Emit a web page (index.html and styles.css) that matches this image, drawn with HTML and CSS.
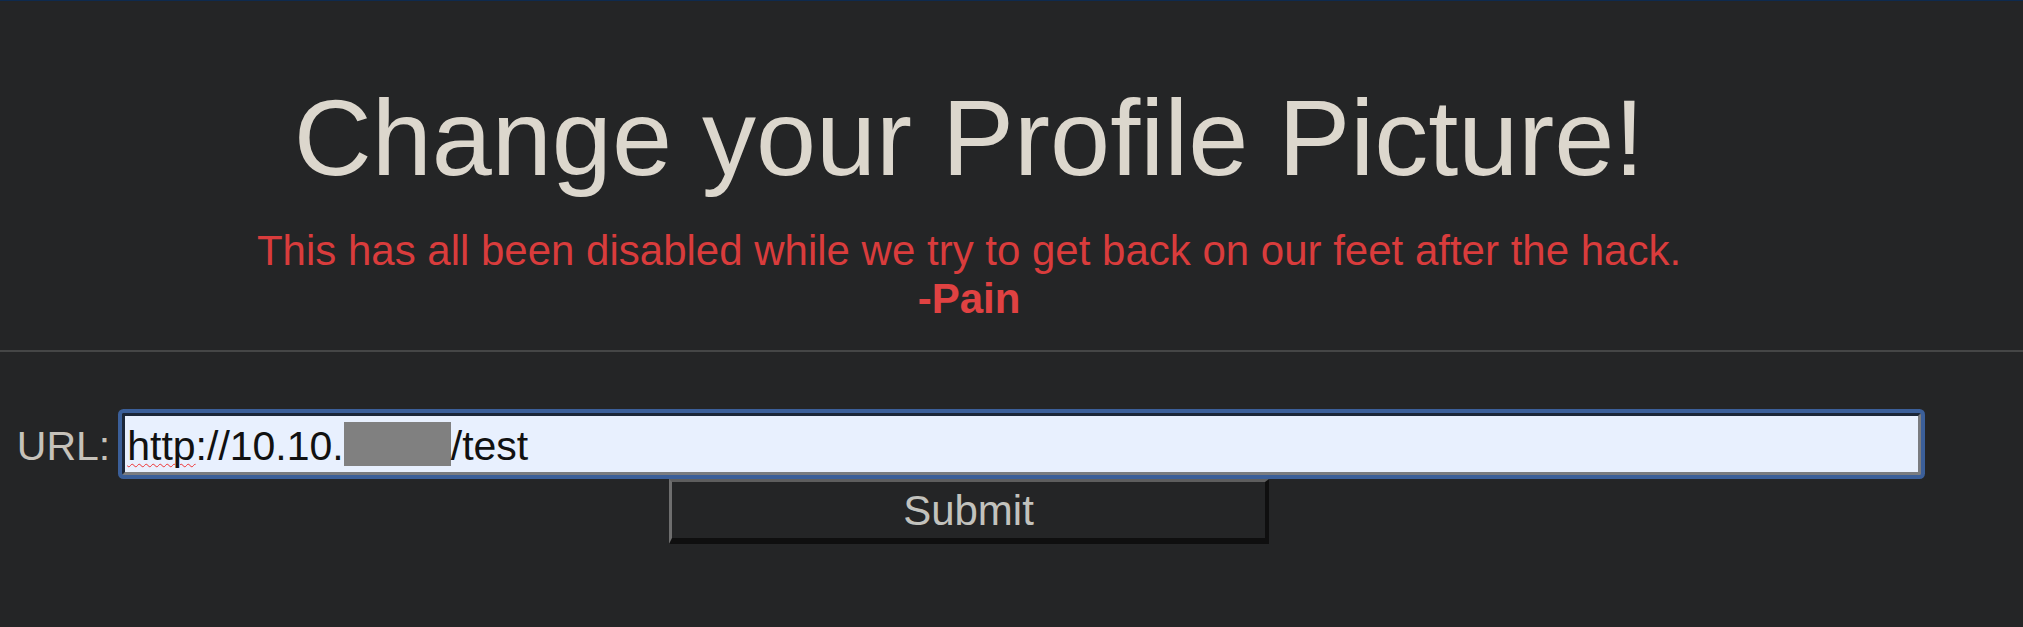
FILE: index.html
```html
<!DOCTYPE html>
<html lang="en">
<head>
  <meta charset="UTF-8" />
  <meta name="viewport" content="width=device-width, initial-scale=1.0" />
  <title>Change your Profile Picture!</title>
  <link rel="stylesheet" href="styles.css">
</head>
<body>
  <header class="masthead">
    <h1>Change your Profile Picture!</h1>
    <p class="notice">This has all been disabled while we try to get back on our feet after the hack.<br><strong>-Pain</strong></p>
  </header>

  <hr class="divider">

  <form class="upload-form" onsubmit="return false;">
    <div class="url-row">
      <label class="url-label" for="url">URL:</label>
      <div class="field" id="url" role="textbox"><span class="misspelt">http</span>://10.10.<span class="redacted"></span>/test</div>
    </div>
    <button class="btn" type="submit">Submit</button>
  </form>
</body>
</html>
```

FILE: styles.css
```css
body {
  margin: 0;
  min-height: 626px;
  background-color: #242526;
  border-top: 1px solid #0e2a4e;
  font-family: 'Liberation Sans', Arial, sans-serif;
}
.masthead {
  padding-right: 85px;
  text-align: center;
}
h1 {
  margin: 77px 0 0;
  font-size: 108px;
  font-weight: 400;
  line-height: 120px;
  color: #dcd7cd;
}
.notice {
  margin: 29px 0 0;
  font-size: 42px;
  line-height: 48px;
  color: #d93c3c;
}
.notice strong {
  color: #e04242;
}
.divider {
  margin: 27px 0 0;
  border: none;
  border-top: 2px solid #454646;
}
.upload-form {
  padding-right: 85px;
  padding-top: 61px;
}
.url-row {
  display: flex;
  justify-content: center;
  align-items: baseline;
  gap: 12px;
}
.url-label {
  font-size: 41px;
  color: #c6c2ba;
}
.field {
  box-sizing: border-box;
  width: 1799px;
  height: 62px;
  padding: 4px 0 0 2px;
  border: 3px solid;
  border-color: #1b2638 #7a7c80 #7a7c80 #1b2638;
  border-radius: 2px;
  box-shadow: 0 0 0 4px #3b5f99;
  background: #e8f0fe;
  font-size: 41px;
  line-height: 52px;
  color: #111;
  text-align: left;
  white-space: nowrap;
}
.misspelt {
  text-decoration: underline wavy #e33;
  text-decoration-thickness: 1px;
  text-underline-offset: 3px;
}
.redacted {
  display: inline-block;
  width: 107px;
  height: 44px;
  vertical-align: -6px;
  background: #808080;
}
.btn {
  display: block;
  box-sizing: border-box;
  width: 600px;
  height: 65px;
  margin: 4px auto 0;
  padding: 2px 0 0;
  border-style: solid;
  border-width: 3px 4px 6px 3px;
  border-color: #5e5e5e #0f0f0f #0f0f0f #6e6e6e;
  background: #242526;
  font-family: 'Liberation Sans', Arial, sans-serif;
  font-size: 42px;
  line-height: 54px;
  color: #c2c2bd;
  cursor: pointer;
}
```
